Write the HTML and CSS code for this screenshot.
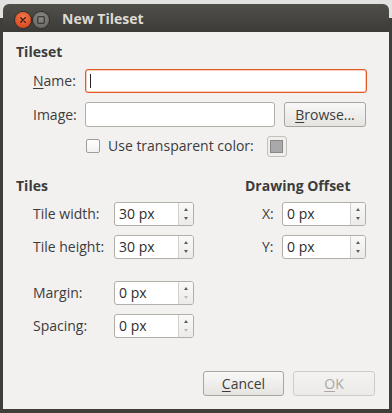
FILE: index.html
```html
<!DOCTYPE html>
<html>
<head>
<meta charset="utf-8">
<link rel="stylesheet" href="styles.css">
</head>
<body>
<div class="screen">
  <div class="window">
    <div class="titlebar">
      <span class="wbtn close">
        <svg width="16" height="16" viewBox="0 0 16 16"><path d="M5.7 5.7 L10.3 10.3 M10.3 5.7 L5.7 10.3" stroke="#3a1a10" stroke-width="1.3" stroke-linecap="round"/></svg>
      </span>
      <span class="wbtn min">
        <svg width="16" height="16" viewBox="0 0 16 16"><rect x="4.7" y="4.7" width="6.6" height="6.6" rx="1" fill="none" stroke="#3a3a38" stroke-width="1.3"/></svg>
      </span>
      <span class="title">New Tileset</span>
    </div>
    <div class="content">
      <div class="section-title">Tileset</div>
      <div class="tileset-grid">
        <div class="label"><u>N</u>ame:</div>
        <div class="entry focused"><span class="caret"></span></div>
        <div class="label">Image:</div>
        <div class="image-row">
          <div class="entry image-entry"></div>
          <div class="button browse"><u>B</u>rowse...</div>
        </div>
        <div></div>
        <div class="check-row">
          <span class="checkbox"></span>
          <span class="check-label">Use transparent color:</span>
          <span class="swatch"><span class="swatch-inner"></span></span>
        </div>
      </div>

      <div class="tiles">
        <div class="col-left">
          <div class="section-title">Tiles</div>
          <div class="spin-grid left-grid">
            <div class="label">Tile width:</div>
            <div class="spin"><span class="spin-text">30 px</span><span class="spin-btns"><i class="up"></i><i class="down"></i></span></div>
            <div class="label">Tile height:</div>
            <div class="spin"><span class="spin-text">30 px</span><span class="spin-btns"><i class="up"></i><i class="down"></i></span></div>
            <div class="label spaced">Margin:</div>
            <div class="spin spaced"><span class="spin-text">0 px</span><span class="spin-btns"><i class="up"></i><i class="down disabled"></i></span></div>
            <div class="label">Spacing:</div>
            <div class="spin"><span class="spin-text">0 px</span><span class="spin-btns"><i class="up"></i><i class="down disabled"></i></span></div>
          </div>
        </div>
        <div class="col-right">
          <div class="section-title">Drawing Offset</div>
          <div class="spin-grid right-grid">
            <div class="label">X:</div>
            <div class="spin wide"><span class="spin-text">0 px</span><span class="spin-btns"><i class="up"></i><i class="down"></i></span></div>
            <div class="label">Y:</div>
            <div class="spin wide"><span class="spin-text">0 px</span><span class="spin-btns"><i class="up"></i><i class="down"></i></span></div>
          </div>
        </div>
      </div>

      <div class="actions">
        <div class="button cancel"><u>C</u>ancel</div>
        <div class="button ok disabled"><u>O</u>K</div>
      </div>
    </div>
  </div>
</div>
</body>
</html>
```
FILE: styles.css
```css
* { box-sizing: border-box; }
html, body { margin: 0; padding: 0; }
body {
  width: 392px;
  height: 413px;
  overflow: hidden;
  font-family: "Open Sans", "Noto Sans", sans-serif;
  font-size: 14px;
  color: #3c3c3c;
}
.screen {
  width: 392px;
  height: 413px;
  padding: 4px 3px 4px 3px;
  background: linear-gradient(to bottom, #e2e2e0 0, #e2e2e0 18px, #3f3e3a 18px, #3f3e3a 100%);
}
.window {
  width: 386px;
  height: 405px;
  display: flex;
  flex-direction: column;
  border-radius: 6px 6px 0 0;
  overflow: hidden;
}
.titlebar {
  height: 28px;
  flex: none;
  display: flex;
  align-items: center;
  padding-left: 12px;
  background: linear-gradient(to bottom, #504f4a, #3c3b37);
}
.wbtn {
  width: 16px;
  height: 16px;
  border-radius: 50%;
  display: flex;
  align-items: center;
  justify-content: center;
  margin-right: 2px;
  margin-top: 3px;
}
.wbtn.close {
  background: radial-gradient(circle at 50% 35%, #f47a4f, #dc4d22 70%, #b9401c);
  box-shadow: 0 0 0 1px #2f2e2a;
}
.wbtn.min {
  background: radial-gradient(circle at 50% 35%, #8b8a85, #6d6c68 70%, #5a5955);
  box-shadow: 0 0 0 1px #2f2e2a;
}
.title {
  margin-left: 11px;
  font-weight: bold;
  font-size: 14px;
  color: #dfdbd2;
}
.content {
  flex: 1;
  background: #f2f1f0;
  display: flex;
  flex-direction: column;
  padding: 11px 14px 13px 13px;
}
.section-title {
  font-weight: bold;
  line-height: 18px;
  height: 18px;
}
.tileset-grid {
  margin-top: 8px;
  margin-left: 17px;
  display: grid;
  grid-template-columns: 52px 282px;
  grid-auto-rows: auto;
  row-gap: 9px;
  align-items: center;
}
.label { line-height: 18px; white-space: nowrap; }
.label u, .button u { text-decoration-thickness: 1px; text-underline-offset: 2px; }
.entry {
  height: 24px;
  background: #fff;
  border: 1px solid #b2aea8;
  border-radius: 3px;
  display: flex;
  align-items: center;
  padding-left: 4px;
}
.entry.focused {
  border-color: #e05a24;
  box-shadow: inset 0 0 0 0.5px #f0a080;
}
.caret {
  width: 1px;
  height: 14px;
  background: #222;
}
.image-row {
  display: flex;
  gap: 9px;
}
.image-entry { width: 190px; height: 25px; }
.button {
  height: 25px;
  border: 1px solid #a9a59f;
  border-radius: 3px;
  background: linear-gradient(to bottom, #f8f8f7, #e6e4e1);
  display: flex;
  align-items: center;
  justify-content: center;
  line-height: 18px;
}
.browse { width: 82px; }
.check-row {
  display: flex;
  align-items: center;
  height: 22px;
  margin-top: -1px;
}
.checkbox {
  width: 14px;
  height: 14px;
  margin-left: 1px;
  border: 1px solid #a09d98;
  border-radius: 2px;
  background: linear-gradient(to bottom, #ffffff, #f3f2f1);
}
.check-label { margin-left: 8px; line-height: 18px; }
.swatch {
  margin-left: 13px;
  width: 20px;
  height: 21px;
  border: 1px solid #c4c1bc;
  border-radius: 3px;
  background: #efeeec;
  display: flex;
  align-items: center;
  justify-content: center;
}
.swatch-inner {
  width: 13px;
  height: 13px;
  background: #a9a9a9;
  border: 1px solid #888;
}
.tiles {
  margin-top: 20px;
  display: flex;
}
.col-left { width: 229px; }
.spin-grid {
  display: grid;
  row-gap: 9px;
  align-items: center;
  margin-top: 7px;
}
.left-grid {
  margin-left: 17px;
  grid-template-columns: 81px 80px;
}
.right-grid {
  margin-left: 17px;
  grid-template-columns: 20px 84px;
}
.spaced { margin-top: 13px; }
.spin {
  height: 24px;
  display: flex;
  border: 1px solid #b2aea8;
  border-radius: 3px;
  overflow: hidden;
  background: #fff;
}
.spin-text {
  flex: 1;
  line-height: 22px;
  padding-left: 4px;
  color: #2e2e2e;
}
.spin-btns {
  width: 15px;
  border-left: 1px solid #d3d0cb;
  background: linear-gradient(to bottom, #f9f9f8, #ecebe9);
  display: flex;
  flex-direction: column;
  align-items: center;
  justify-content: center;
  gap: 6px;
}
.spin-btns i {
  display: block;
  width: 0;
  height: 0;
  border-left: 2.5px solid transparent;
  border-right: 2.5px solid transparent;
}
.spin-btns i.up { border-bottom: 3px solid #5c5c5c; }
.spin-btns i.down { border-top: 3px solid #5c5c5c; }
.spin-btns i.down.disabled { border-top-color: #bdbcba; }
.actions {
  margin-top: auto;
  display: flex;
  justify-content: flex-end;
  gap: 9px;
  padding-right: 0;
}
.cancel { width: 81px; }
.ok { width: 82px; }
.ok.disabled {
  color: #a9a8a5;
  border-color: #cfccc8;
  background: linear-gradient(to bottom, #f3f2f1, #ecebe9);
}
```
